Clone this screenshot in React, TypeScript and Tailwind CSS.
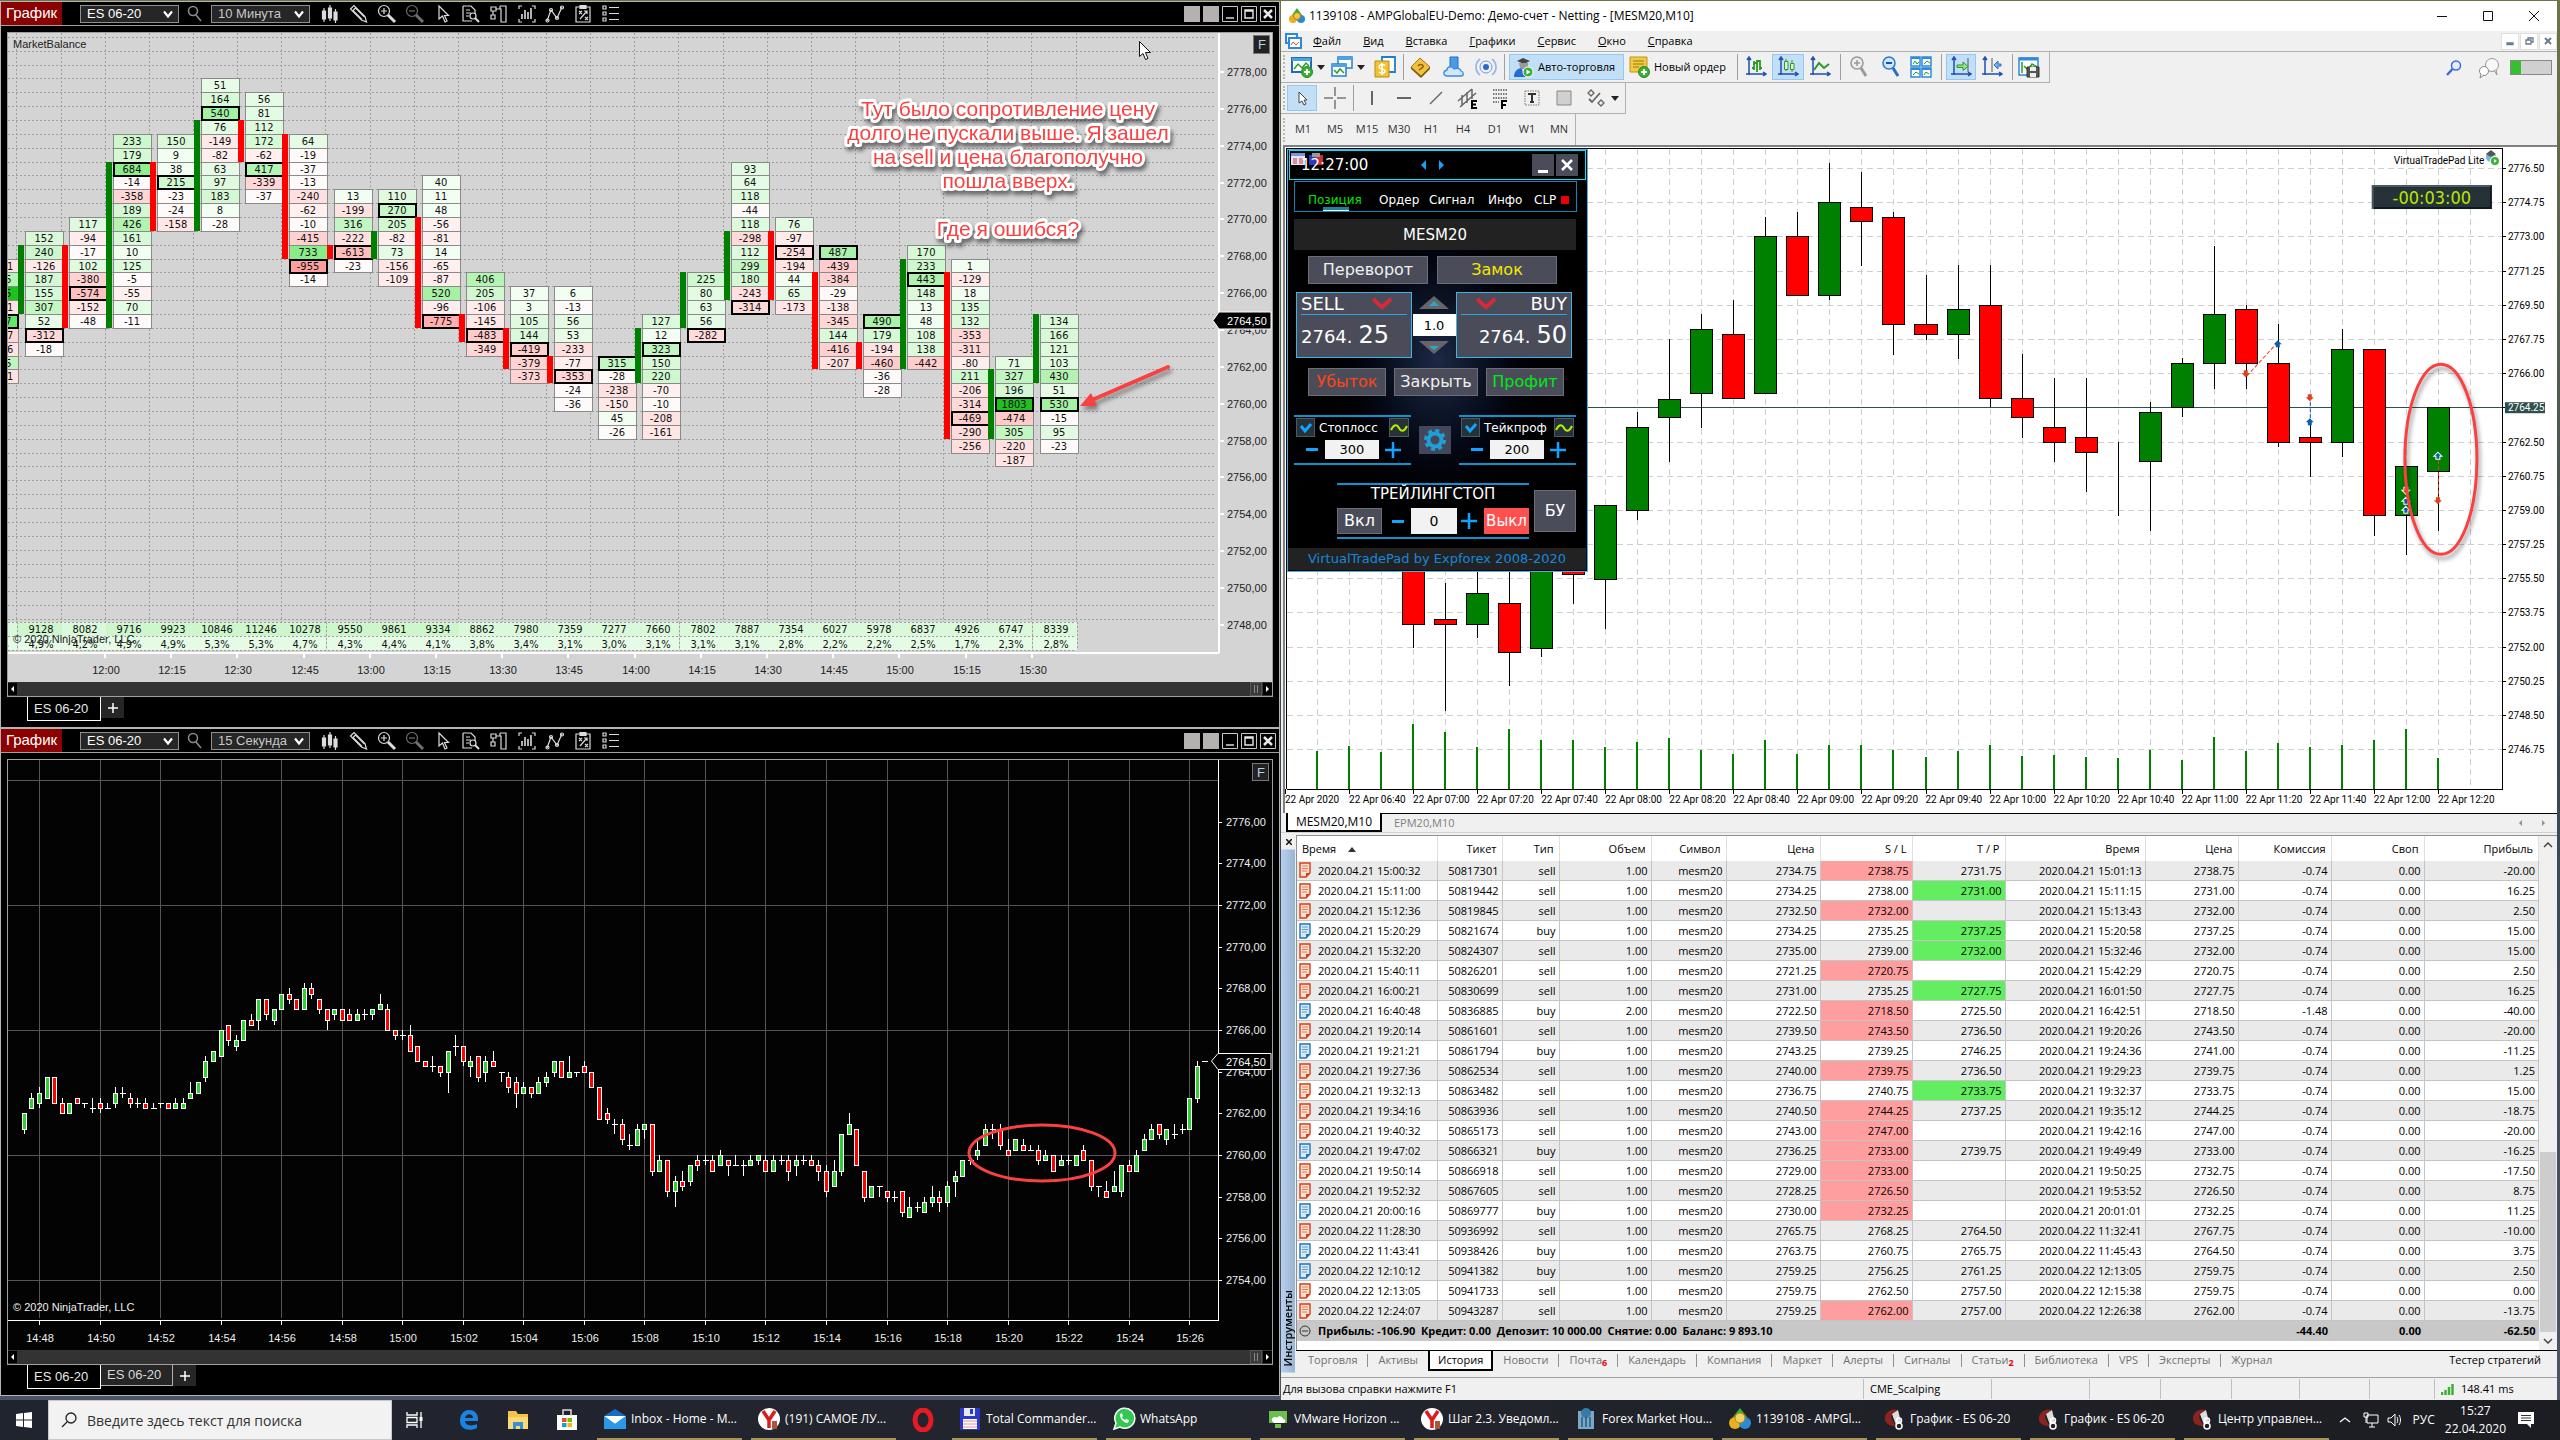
import React from "react";
import type { ReactNode } from "react";

/* ------------------------------------------------------------------ */
/* Cluster chart data                                                   */
/* ------------------------------------------------------------------ */

type Cluster = {
  start: number;
  values: number[];
  poc: number;
  bar?: [string, number, number];
  volume: string;
  share: string;
};

const UP = "#008000";
const DOWN = "#ff0000";

const clusters: Cluster[] = [
  { start: 13, values: [-1211, 2395, 1155, -1211, 3977, -1337, -1216, 2345, -1211], poc: 4, volume: "", share: "4,9%" },
  { start: 11, values: [152, 240, -126, 187, 155, 307, 52, -312, -18], poc: 7, bar: [UP, 12, 17], volume: "9128", share: "4,9%" },
  { start: 10, values: [117, -94, -17, 102, -380, -574, -152, -48], poc: 5, bar: [DOWN, 12, 18], volume: "8082", share: "4,2%" },
  { start: 4, values: [233, 179, 684, -14, -358, 189, 426, 161, 10, 125, -5, -55, 70, -11], poc: 2, bar: [UP, 6, 18], volume: "9716", share: "4,9%" },
  { start: 4, values: [150, 9, 38, 215, -23, -24, -158], poc: 3, bar: [DOWN, 6, 11], volume: "9923", share: "4,9%" },
  { start: 0, values: [51, 164, 540, 76, -149, -82, 63, 97, 183, 8, -28], poc: 2, bar: [UP, 3, 11], volume: "10846", share: "5,3%" },
  { start: 1, values: [56, 81, 112, 172, -62, 417, -339, -37], poc: 5, bar: [DOWN, 3, 6], volume: "11246", share: "5,3%" },
  { start: 4, values: [64, -19, -37, -13, -240, -62, -10, -415, 733, -955, -14], poc: 9, bar: [DOWN, 4, 13], volume: "10278", share: "4,7%" },
  { start: 8, values: [13, -199, 316, -222, -613, -23], poc: 4, bar: [DOWN, 12, 13], volume: "9550", share: "4,3%" },
  { start: 8, values: [110, 270, 205, -82, 73, -156, -109], poc: 1, bar: [UP, 11, 13], volume: "9861", share: "4,4%" },
  { start: 7, values: [40, 11, 48, -56, -81, 14, -65, -87, 520, -96, -775], poc: 10, bar: [DOWN, 10, 18], volume: "9334", share: "4,1%" },
  { start: 14, values: [406, 205, -106, -145, -483, -349], poc: 4, bar: [DOWN, 17, 19], volume: "8862", share: "3,8%" },
  { start: 15, values: [37, 3, 105, 144, -419, -379, -373], poc: 4, bar: [DOWN, 18, 21], volume: "7980", share: "3,4%" },
  { start: 15, values: [6, -13, 56, 53, -233, -77, -353, -24, -36], poc: 6, bar: [DOWN, 20, 22], volume: "7359", share: "3,1%" },
  { start: 20, values: [315, -28, -238, -150, 45, -26], poc: 0, volume: "7277", share: "3,0%" },
  { start: 17, values: [127, 12, 323, 150, 220, -70, -10, -208, -161], poc: 2, bar: [UP, 18, 22], volume: "7660", share: "3,1%" },
  { start: 14, values: [225, 80, 63, 56, -282], poc: 4, bar: [UP, 14, 18], volume: "7802", share: "3,1%" },
  { start: 6, values: [93, 64, 118, -44, 118, -298, 112, 299, 180, -243, -314], poc: 10, bar: [UP, 11, 16], volume: "7887", share: "3,1%" },
  { start: 10, values: [76, -97, -254, -194, 44, 65, -173], poc: 2, bar: [DOWN, 11, 16], volume: "7354", share: "2,8%" },
  { start: 12, values: [487, -439, -384, -29, -138, -345, 144, -416, -207], poc: 0, bar: [DOWN, 14, 21], volume: "6027", share: "2,2%" },
  { start: 17, values: [490, 179, -194, -460, -36, -28], poc: 0, bar: [DOWN, 19, 21], volume: "5978", share: "2,2%" },
  { start: 12, values: [170, 233, 443, 148, 13, 48, 108, 138, -442], poc: 2, bar: [UP, 13, 21], volume: "6837", share: "2,5%" },
  { start: 13, values: [1, -129, 18, 135, 132, -353, -311, -80, 211, -206, -314, -469, -290, -256], poc: 11, bar: [DOWN, 14, 26], volume: "4926", share: "1,7%" },
  { start: 20, values: [71, 327, 196, 1803, -474, 305, -220, -187], poc: 3, bar: [UP, 21, 26], volume: "6747", share: "2,3%" },
  { start: 17, values: [134, 166, 121, 103, 430, 51, 530, -15, 95, -23], poc: 6, bar: [UP, 17, 22], volume: "8339", share: "2,8%" },
];

const rowY = (row: number) => Math.round(78.4 + row * 13.86);
const colX = (col: number) => Math.round(24.6 + (col - 1) * 44.13);

function shade(v: number) {
  if (v >= 1000 && v < 2000) return "#1fc11f";
  const n = Math.abs(v) % 1000;
  if (v > 0) {
    const c = n < 50 ? 243 : Math.round(238 - n * 0.14);
    return `rgb(${c},${n < 50 ? 254 : Math.round(252 - n * 0.02)},${c})`;
  }
  const c = n < 50 ? 250 : Math.round(245 - n * 0.09);
  return `rgb(255,${c},${c})`;
}

function ClusterChart() {
  const rows = Array.from({ length: 43 }, (_, i) => i - 3);
  const prices = Array.from({ length: 16 }, (_, i) => i);
  return (
    <svg viewBox="8 33 1264 649" className="block h-auto w-full bg-[#d4d4d4] font-['Liberation_Sans',Arial,sans-serif]">
      <g stroke="#a0a0a0" strokeDasharray="2 2" shapeRendering="crispEdges">
        {rows.map((r) => (
          <line key={r} x1="8" x2="1216" y1={rowY(r) + 0.5} y2={rowY(r) + 0.5} />
        ))}
        {clusters.map((_, i) => (
          <line key={i} x1={colX(i) + 36.5} x2={colX(i) + 36.5} y1="33" y2="650" />
        ))}
      </g>
      {clusters.map((c, i) => (
        <g key={i} shapeRendering="crispEdges">
          <rect x={colX(i) - 7} y="622" width="44" height="14" fill={Number(c.volume) > 9000 ? "#cdf6cd" : "#daf9da"} />
          <rect x={colX(i) - 7} y="636" width="44" height="14" fill="#e6fbe6" />
          <path d={`M${colX(i) + 37.5} 622v28`} stroke="#a0a0a0" strokeDasharray="2 2" />
        </g>
      ))}
      <path d="M8 622.5H1076M8 636.5H1076M8 650.5H1076" stroke="#a0a0a0" strokeDasharray="2 2" shapeRendering="crispEdges" />
      <g fill="#111" textAnchor="middle" className="font-['DejaVu_Sans_Condensed','Noto_Sans',sans-serif]">
        {clusters.map((c, i) => (
          <g key={i} fontSize="11">
            {c.bar && (
              <rect
                x={colX(i) - 7}
                y={rowY(c.bar[1])}
                width="6"
                height={rowY(c.bar[2]) - rowY(c.bar[1])}
                fill={c.bar[0]}
                shapeRendering="crispEdges"
              />
            )}
            {c.values.map((v, j) => {
              const y = rowY(c.start + j);
              const h = rowY(c.start + j + 1) - y;
              return (
                <g key={j}>
                  <rect x={colX(i) + 0.5} y={y + 0.5} width="38" height={h} fill={shade(v)} stroke="#8a8a8a" shapeRendering="crispEdges" />
                  <text x={colX(i) + 19} y={y + 11}>{v}</text>
                </g>
              );
            })}
            <rect
              x={colX(i) + 1}
              y={rowY(c.start + c.poc) + 1}
              width="37"
              height="13"
              fill="none"
              stroke="#000"
              strokeWidth="2"
              shapeRendering="crispEdges"
            />
            <text x={colX(i) + 16} y="633">{c.volume}</text>
            <text x={colX(i) + 16} y="648">{c.share}</text>
          </g>
        ))}
      </g>
      <g stroke="#fff" strokeWidth="2" shapeRendering="crispEdges">
        <path d="M8 653H1219M1219 33V653" fill="none" />
        {prices.map((k) => (
          <line key={k} x1="1219" x2="1224" y1={Math.round(72 + k * 36.86)} y2={Math.round(72 + k * 36.86)} />
        ))}
        {prices.slice(1).map((k) => (
          <line key={k} x1={Math.round(105 + (k - 1) * 66.2)} x2={Math.round(105 + (k - 1) * 66.2)} y1="653" y2="658" />
        ))}
      </g>
      <g fontSize="11" fill="#222">
        {prices.map((k) => (
          <text key={k} x="1227" y={Math.round(76 + k * 36.86)}>{`${2778 - k * 2},00`}</text>
        ))}
        <text x="13" y="48">MarketBalance</text>
        <text x="13" y="643">© 2020 NinjaTrader, LLC</text>
        <g textAnchor="middle">
          {["12:00", "12:15", "12:30", "12:45", "13:00", "13:15", "13:30", "13:45", "14:00", "14:15", "14:30", "14:45", "15:00", "15:15", "15:30"].map((t, k) => (
            <text key={t} x={Math.round(106 + k * 66.2)} y="674">{t}</text>
          ))}
        </g>
      </g>
      <path d="M1213 320.5L1219 312H1271V329H1219z" fill="#000" stroke="#fff" />
      <text x="1227" y="325" fontSize="11" fill="#fff">2764,50</text>
      <rect x="1253.5" y="35.5" width="16" height="18" fill="#222" stroke="#777" />
      <text x="1258" y="49" fontSize="13" fill="#b8d4e8">F</text>
      <g
        fontSize="21"
        fill="#f94141"
        stroke="#fff"
        strokeWidth="6"
        strokeLinejoin="round"
        paintOrder="stroke"
        textAnchor="middle"
        className="drop-shadow-[2px_4px_2px_rgba(0,0,0,0.5)]"
      >
        <text x="1008" y="116">Тут было сопротивление цену</text>
        <text x="1008" y="140">долго не пускали выше. Я зашел</text>
        <text x="1008" y="164">на sell и цена благополучно</text>
        <text x="1008" y="188">пошла вверх.</text>
        <text x="1008" y="236">Где я ошибся?</text>
      </g>
      <g className="drop-shadow-[2px_4px_2px_rgba(0,0,0,0.4)]">
        <path d="M1168 367L1092 400" stroke="#f94141" strokeWidth="4" strokeLinecap="round" />
        <path d="M1080 406L1091 393L1097 406z" fill="#f94141" />
      </g>
      <path d="M1139.500 41.500v15l3.500-3 2.500 6 2.500-1-2.500-6h5z" fill="#fff" stroke="#111" />
    </svg>
  );
}

/* ------------------------------------------------------------------ */
/* 15 second chart: [open, close, high, low] in ticks around 2760        */
/* ------------------------------------------------------------------ */

const ticks: number[][] = [
  [5, 8, 8, 4], [9, 11, 12, 9], [10, 12, 13, 9], [11, 15, 15, 11], [15, 10, 15, 10], [10, 8, 11, 8], [8, 10, 10, 8], [11, 10, 11, 10],
  [10, 10, 10, 9], [9, 9, 11, 8], [10, 9, 11, 8], [9, 9, 10, 9], [10, 12, 13, 9], [12, 12, 13, 11], [11, 10, 12, 9], [10, 10, 11, 9],
  [10, 9, 11, 9], [9, 9, 10, 9], [10, 10, 10, 9], [10, 9, 10, 9], [9, 10, 11, 9], [9, 10, 11, 9], [11, 12, 14, 11], [12, 14, 14, 12],
  [15, 18, 19, 14], [18, 20, 20, 18], [19, 24, 24, 19], [25, 22, 25, 21], [21, 22, 23, 20], [22, 26, 26, 22], [26, 25, 27, 25],
  [26, 30, 30, 24], [30, 27, 30, 26], [26, 28, 28, 25], [28, 31, 31, 28], [31, 30, 32, 29], [30, 28, 30, 28], [28, 32, 33, 28],
  [32, 31, 33, 30], [30, 28, 30, 27], [28, 26, 28, 24], [27, 28, 28, 26], [28, 26, 28, 26], [27, 26, 28, 26], [26, 27, 28, 26],
  [27, 27, 28, 26], [27, 28, 28, 26], [28, 29, 31, 28], [28, 24, 29, 24], [24, 23, 24, 22], [23, 23, 24, 22], [23, 20, 25, 20],
  [21, 18, 21, 18], [18, 17, 18, 17], [17, 17, 19, 16], [17, 16, 17, 15], [16, 20, 20, 12], [21, 21, 23, 19], [21, 18, 21, 17],
  [17, 18, 19, 15], [19, 15, 19, 14], [16, 18, 19, 14], [18, 17, 20, 17], [16, 16, 16, 14], [15, 13, 16, 12], [14, 12, 15, 9],
  [12, 13, 14, 12], [13, 12, 13, 11], [12, 14, 15, 12], [14, 15, 16, 13], [16, 18, 18, 15], [18, 15, 18, 15], [15, 16, 19, 15],
  [16, 16, 16, 15], [17, 16, 18, 16], [16, 13, 16, 13], [13, 7, 13, 7], [8, 7, 9, 6], [6, 6, 7, 4], [6, 3, 7, 2], [2, 2, 4, 1],
  [2, 5, 6, 2], [5, 6, 6, 3], [6, -3, 6, -4], [-3, -1, 0, -3], [-1, -7, -1, -8], [-7, -5, -4, -10], [-5, -6, -3, -7], [-5, -2, -2, -6],
  [-1, -2, 0, -3], [-1, -1, 0, -2], [-1, -3, 0, -3], [-2, 0, 1, -2], [-1, -2, -1, -4], [-2, -2, 0, -2], [-2, -2, -1, -4], [-2, -1, 0, -2],
  [-1, 0, 0, -2], [-1, -3, 0, -3], [-3, -1, 0, -3], [-1, -1, 0, -2], [-1, -3, 0, -5], [-2, -1, 0, -4], [-1, -1, 0, -2], [-1, -2, 0, -2],
  [-2, -3, -1, -5], [-3, -7, -2, -8], [-6, -3, -1, -6], [-3, 4, 4, -4], [4, 6, 8, 4], [5, -2, 5, -2], [-3, -8, -3, -9], [-8, -6, -6, -8],
  [-6, -6, -6, -8], [-7, -8, -7, -9], [-8, -8, -7, -9], [-7, -11, -7, -12], [-12, -10, -8, -12], [-10, -10, -9, -11], [-11, -9, -8, -11],
  [-9, -8, -6, -10], [-8, -9, -7, -11], [-9, -6, -5, -10], [-5, -4, -3, -8], [-4, -1, -1, -4], [-1, -1, 0, -2], [0, 1, 3, -1],
  [2, 5, 6, 2], [5, 5, 6, 3], [5, 2, 6, 1], [1, 0, 3, 0], [1, 3, 3, 1], [2, 1, 3, 1], [1, 1, 2, 1], [1, -1, 2, -2], [-1, 0, 1, -1],
  [0, -3, 0, -3], [-2, -1, 0, -2], [-1, -1, 0, -2], [-2, 0, 0, -2], [1, -1, 2, -1], [-1, -6, -1, -7], [-6, -6, -6, -8], [-7, -8, -5, -8],
  [-7, -6, -3, -7], [-7, -2, -2, -8], [-2, -3, -1, -3], [-3, 0, 1, -3], [1, 3, 4, 1], [3, 5, 6, 3], [6, 4, 6, 3], [3, 5, 5, 2],
  [4, 4, 6, 3], [5, 5, 6, 4], [5, 11, 11, 5], [11, 17, 18, 10], [18, 18, 18, 18],
];

const tickY = (t: number) => Math.round(1155 - t * 5.208);

function SecondsChart() {
  const cols = Array.from({ length: 20 }, (_, i) => i);
  const colCx = (i: number) => Math.round(39 + i * 60.54);
  return (
    <svg viewBox="8 760 1264 590" className="block h-auto w-full bg-[#030303] font-['Liberation_Sans',Arial,sans-serif]">
      <g stroke="#565656" shapeRendering="crispEdges">
        {[72, 48, 24, 0, -24].map((t) => (
          <line key={t} x1="8" x2="1218" y1={tickY(t) + 0.5} y2={tickY(t) + 0.5} />
        ))}
        {cols.map((i) => (
          <line key={i} x1={colCx(i) + 0.5} x2={colCx(i) + 0.5} y1="760" y2="1318" />
        ))}
      </g>
      <g shapeRendering="crispEdges">
        {ticks.map(([o, c, h, l], i) => {
          const x = Math.round(39 + (i - 2) * 7.567);
          const top = tickY(Math.max(o, c));
          const bottom = tickY(Math.min(o, c));
          return (
            <g key={i}>
              <rect x={x} y={tickY(h)} width="1" height={tickY(l) - tickY(h)} fill="#fff" />
              {o === c ? (
                <rect x={x - 2} y={top} width="6" height="1" fill="#fff" />
              ) : (
                <rect
                  x={x - 1.5}
                  y={top + 0.5}
                  width="4"
                  height={bottom - top}
                  fill={c > o ? "#32cd32" : "#ff0000"}
                  stroke="#fff"
                />
              )}
            </g>
          );
        })}
      </g>
      <g stroke="#fff" strokeWidth="1" shapeRendering="crispEdges">
        <path d="M8 1320.5H1218.5V760" fill="none" />
        {cols.map((i) => (
          <line key={i} x1={colCx(i) + 0.5} x2={colCx(i) + 0.5} y1="1320" y2="1325" />
        ))}
        {cols.slice(0, 12).map((i) => (
          <line key={i} x1="1218" x2="1222" y1={tickY(64 - i * 8) + 0.5} y2={tickY(64 - i * 8) + 0.5} />
        ))}
      </g>
      <g fontSize="11" fill="#f0f0f0">
        {cols.slice(0, 12).map((i) => (
          <text key={i} x="1226" y={tickY(64 - i * 8) + 4}>{`${2776 - i * 2},00`}</text>
        ))}
        <text x="13" y="1311">© 2020 NinjaTrader, LLC</text>
        <g textAnchor="middle">
          {cols.map((i) => {
            const m = 48 + i * 2;
            return (
              <text key={i} x={colCx(i) + 1} y="1342">{`${m < 60 ? 14 : 15}:${String(m % 60).padStart(2, "0")}`}</text>
            );
          })}
        </g>
      </g>
      <path d="M1211.5 1061L1218 1053.5H1271V1069.5H1218z" fill="#000" stroke="#fff" />
      <text x="1226" y="1066" fontSize="11" fill="#fff">2764,50</text>
      <rect x="1252.5" y="763.5" width="16" height="17" fill="#222" stroke="#777" />
      <text x="1257" y="777" fontSize="13" fill="#b8d4e8">F</text>
      <ellipse cx="1042" cy="1153" rx="73" ry="28" fill="none" stroke="#f94141" strokeWidth="3" />
    </svg>
  );
}

/* ------------------------------------------------------------------ */
/* NinjaTrader windows                                                  */
/* ------------------------------------------------------------------ */

function DarkSelect({ label, value, muted }: { label: string; value: string; muted?: boolean }) {
  return (
    <span className="relative flex">
      <select
        aria-label={label}
        className={`h-[18px] w-[99px] appearance-none border border-[#8f8f8f] bg-[#262626] pl-1.5 text-[13px] leading-4 ${muted ? "text-[#c8c8c8]" : "text-white"}`}
      >
        <option>{value}</option>
      </select>
      <svg viewBox="0 0 10 8" className="pointer-events-none absolute top-[5px] right-1.5 h-2 w-2.5">
        <path d="M1 1.500L5 6.500L9 1.500" fill="none" stroke="#fff" strokeWidth="2.200" />
      </svg>
    </span>
  );
}

const ninjaTools: { name: string; dim?: boolean; art: ReactNode }[] = [
  { name: "Стиль графика", art: <><path d="M3 4v14M9 1v16M14.500 5v14" /><path d="M1.500 7h3v8h-3zM7.500 4h3v10h-3zM13 8h3v8h-3z" fill="currentColor" /></> },
  { name: "Рисование", art: <><path d="M1.500 5l3.500-3.500 11 11 1.500 5.500-5-2z" /><path d="M4 6.500l9 9M6.500 4l9 9M3.500 7l3.500-3.500" /></> },
  { name: "Увеличить", art: <><circle cx="7" cy="7" r="5.500" /><path d="M4 7h6M7 4v6" /><path d="M11 11l7 7" strokeWidth="3" /></> },
  { name: "Уменьшить", dim: true, art: <><circle cx="7" cy="7" r="5.500" /><path d="M4 7h6" /><path d="M11 11l7 7" strokeWidth="3" /></> },
  { name: "Курсор", art: <path d="M6 2v13l3.500-3 2.500 6 2-1-2.500-5.500h4z" /> },
  { name: "Окно данных", art: <><path d="M2 2h8l4 4v4M2 2v15h9M5 6h4M5 9h5M5 12h3" /><circle cx="12" cy="12" r="3" /><path d="M14 14l4 4" strokeWidth="2" /></> },
  { name: "Chart Trader", art: <><path d="M11 2h6v16h-5V5H7" /><path d="M2 3h5v4H2zM2 11h4v4H2zM4 7v4M11 2v3" /></> },
  { name: "Серии данных", art: <><path d="M2 5V2h3M15 2h3v3M2 15v3h3M15 18h3v-3" /><path d="M5 10v5M8 6v9M11 8v7M14 4v11" strokeWidth="1.600" /></> },
  { name: "Индикаторы", art: <><path d="M2 17L6 6l6 8L17 3" /><circle cx="2.500" cy="16.500" r="1.500" /><circle cx="6" cy="6" r="1.500" /><circle cx="12" cy="14" r="1.500" /><circle cx="17" cy="3.500" r="1.500" /></> },
  { name: "Стратегии", art: <><path d="M3 3h14v15H3z" /><path d="M7 1.500h6v3H7z" fill="currentColor" /><path d="M6 7l3 3M9 7L6 10M12 13l3 3M15 13l-3 3M7 15l7-8M11 7h3v3" /></> },
  { name: "Свойства", art: <><path d="M2 2h3v3H2zM2 8h3v3H2zM2 14h3v3H2z" /><path d="M8 3.500h10M8 9.500h10M8 15.500h10" /></> },
];

function NinjaTitleBar({ interval }: { interval: string }) {
  return (
    <header className="flex h-6 items-center border-b border-[#a0a0a0] bg-black text-white">
      <h2 className="flex h-full w-[61px] items-center justify-center bg-[#8b0000] text-[15px]">График</h2>
      <div className="ml-[18px] flex items-center">
        <DarkSelect label="Инструмент" value="ES 06-20" />
        <button aria-label="Поиск" className="mx-1.5 flex">
          <svg viewBox="0 0 20 20" className="size-5" fill="none" stroke="#8a8a8a" strokeWidth="1.600">
            <circle cx="8" cy="7" r="4.500" />
            <path d="M11 11l5 6" />
          </svg>
        </button>
        <DarkSelect label="Интервал" value={interval} muted />
      </div>
      <div className="ml-[11px] flex gap-2">
        {ninjaTools.map((t) => (
          <button key={t.name} aria-label={t.name} className={t.dim ? "text-[#707070]" : "text-[#dcdcdc]"}>
            <svg viewBox="0 0 20 20" className="size-5" fill="none" stroke="currentColor" strokeWidth="1.200">
              {t.art}
            </svg>
          </button>
        ))}
      </div>
      <div className="mr-[3px] ml-auto flex gap-[3px]">
        <span className="size-4 bg-[#b5b1b1]" />
        <span className="size-4 bg-[#b5b1b1]" />
        {[
          ["Свернуть", "M4 12h8"],
          ["Развернуть", "M4 4h8v8H4zM4 5h8"],
          ["Закрыть", "M4 4l8 8M12 4l-8 8"],
        ].map(([name, d]) => (
          <button key={name} aria-label={name} className="flex">
            <svg viewBox="0 0 16 16" className="size-4" fill="none" stroke="#e8e8e8">
              <path d="M.500.500h15v15H.500z" stroke="#c8c8c8" />
              <path d={d} strokeWidth={name === "Закрыть" ? 2.5 : 1.4} />
            </svg>
          </button>
        ))}
      </div>
    </header>
  );
}

function NinjaWindow({ interval, tabs, children }: { interval: string; tabs: string[]; children: ReactNode }) {
  return (
    <section className="flex flex-col border border-[#b4b4b4] bg-black font-['Liberation_Sans',Arial,sans-serif]">
      <NinjaTitleBar interval={interval} />
      <div className="mx-1.5 mt-1.5 border border-[#a0a0a0]">
        {children}
        <div className="flex h-3.5 items-center justify-between bg-[#333]">
          <button aria-label="Назад" className="flex h-3 w-[9px] items-center bg-black">
            <svg viewBox="0 0 9 12" className="h-3 w-[9px]"><path d="M6 3v6L3 6z" fill="#fff" /></svg>
          </button>
          <span className="mr-px ml-auto flex h-3.5 w-3 justify-center gap-0.5 border border-[#555] bg-[#3a3a3a] py-0.5">
            <i className="w-px bg-[#888]" />
            <i className="w-px bg-[#888]" />
          </span>
          <button aria-label="Вперёд" className="flex h-3 w-[9px] items-center bg-black">
            <svg viewBox="0 0 9 12" className="h-3 w-[9px]"><path d="M3 3v6l3-3z" fill="#fff" /></svg>
          </button>
        </div>
      </div>
      <nav className="flex h-[30px] items-start pl-[26px] text-[13px] text-[#d8d8d8]">
        {tabs.map((t, i) => (
          <button
            key={i}
            className={
              i === 0
                ? "h-6 w-[74px] border border-t-0 border-white bg-black pl-1.5 text-left text-[#e8e8e8]"
                : "h-[21px] w-[72px] border-r border-b border-[#b0b0b0] bg-[#262626] pl-1.5 text-left"
            }
          >
            {t}
          </button>
        ))}
        <button className="flex h-[21px] w-[23px] items-center justify-center bg-[#262626]" aria-label="Новая вкладка">
          <svg viewBox="0 0 10 10" className="size-2.5"><path d="M0 5h10M5 0v10" stroke="#fff" strokeWidth="1.500" /></svg>
        </button>
      </nav>
    </section>
  );
}

/* ------------------------------------------------------------------ */
/* MetaTrader chart                                                     */
/* ------------------------------------------------------------------ */

/* colour, body top, body bottom, wick top, wick bottom */
const bars: [string, number, number, number, number][] = [
  ["d", 560, 624, 550, 648], ["d", 619, 624, 583, 711], ["u", 593, 624, 560, 638], ["d", 603, 652, 560, 686],
  ["u", 560, 648, 560, 657], ["d", 560, 574, 560, 604], ["u", 505, 579, 505, 629], ["u", 427, 510, 412, 520],
  ["u", 399, 417, 339, 462], ["u", 329, 393, 314, 428], ["d", 334, 398, 300, 398], ["u", 236, 393, 217, 393],
  ["d", 236, 295, 212, 295], ["u", 202, 295, 163, 300], ["d", 207, 221, 172, 266], ["d", 217, 324, 212, 355],
  ["d", 324, 334, 275, 340], ["u", 309, 334, 265, 359], ["d", 305, 398, 265, 407], ["d", 398, 417, 354, 438],
  ["d", 427, 442, 378, 462], ["d", 437, 452, 378, 492], ["d", 456, 456, 442, 516], ["u", 412, 461, 402, 531],
  ["u", 363, 407, 358, 417], ["u", 314, 363, 246, 389], ["d", 309, 363, 305, 389], ["d", 363, 442, 324, 447],
  ["d", 437, 442, 425, 477], ["u", 349, 442, 329, 457], ["d", 349, 515, 349, 536], ["u", 466, 515, 466, 555],
  ["u", 407, 471, 407, 531],
];

const volumes = [
  751, 746, 752, 724, 732, 747, 729, 740, 740, 747, 742, 738, 750, 754, 740, 754, 745, 745, 750, 757, 751, 745, 756, 755, 757, 758, 750,
  760, 737, 751, 743, 747, 745, 740, 729, 758,
];

function TradeArrow({ x, y, up, outlined }: { x: number; y: number; up?: boolean; outlined?: boolean }) {
  return (
    <path
      d={up ? `M${x} ${y - 4}l4 4h-2v3h-4v-3h-2z` : `M${x} ${y + 4}l4-4h-2v-3h-4v3h-2z`}
      fill={up ? "#0a5cb0" : "#e0401c"}
      stroke={outlined ? "#fff" : "none"}
    />
  );
}

function MetaChart() {
  const levels = Array.from({ length: 18 }, (_, i) => i);
  const levelY = (i: number) => Math.round(168 + i * 34.19);
  const times = ["2020", "06:40", "07:00", "07:20", "07:40", "08:00", "08:20", "08:40", "09:00", "09:20", "09:40", "10:00", "10:20", "10:40", "11:00", "11:20", "11:40", "12:00", "12:20"];
  return (
    <svg viewBox="1285 147 1271 665" className="block h-auto w-full bg-white font-['Roboto','Noto_Sans',sans-serif]">
      <g stroke="#cfcfcf" strokeDasharray="6 4" shapeRendering="crispEdges">
        {levels.map((i) => (
          <line key={i} x1="1287" x2="2501" y1={levelY(i) + 0.5} y2={levelY(i) + 0.5} />
        ))}
        {Array.from({ length: 37 }, (_, i) => (
          <line key={i} x1={1317.5 + i * 32} x2={1317.5 + i * 32} y1="149" y2="789" />
        ))}
      </g>
      <path d="M1286 407.5H2501" stroke="#2f4f4f" shapeRendering="crispEdges" />
      <g shapeRendering="crispEdges">
        {volumes.map((y, i) => (
          <rect key={i} x={1316 + i * 32} y={y} width="2" height={789 - y} fill="#008000" />
        ))}
        {bars.map(([dir, top, bottom, hi, lo], i) => {
          const x = 1413 + i * 32;
          return (
            <g key={i}>
              <rect x={x} y={hi} width="1" height={lo - hi} />
              <rect x={x - 11 + 0.5} y={top + 0.5} width="22" height={bottom - top} fill={dir === "u" ? UP : DOWN} stroke="#000" />
            </g>
          );
        })}
        <path d="M1286.5 789V148.5H2501.5V789.5H1286.5" fill="none" stroke="#000" />
        {levels.map((i) => (
          <line key={i} x1="2501" x2="2505" y1={levelY(i) + 0.5} y2={levelY(i) + 0.5} stroke="#000" />
        ))}
        {times.map((_, i) => (
          <line key={i} x1={1285.5 + i * 64} x2={1285.5 + i * 64} y1="789" y2="793" stroke="#000" />
        ))}
      </g>
      <path d="M2246 376L2277 342" stroke="#e0401c" strokeDasharray="4 2" />
      <path d="M2309.500 402V420" stroke="#0a5cb0" strokeDasharray="4 2" />
      <path d="M2437.500 460V498" stroke="#e0401c" strokeDasharray="4 2" />
      <TradeArrow x={2245} y={373} />
      <TradeArrow x={2277} y={344} up />
      <TradeArrow x={2309} y={397} />
      <TradeArrow x={2309} y={422} up />
      <TradeArrow x={2405} y={490} outlined />
      <TradeArrow x={2405} y={501} up outlined />
      <TradeArrow x={2405} y={510} up outlined />
      <TradeArrow x={2437} y={456} up outlined />
      <TradeArrow x={2437} y={500} />
      <g fontSize="10">
        {levels.map((i) => (
          <text key={i} x="2507" y={levelY(i) + 4}>{(2776.5 - i * 1.75).toFixed(2)}</text>
        ))}
        {times.map((t, i) => (
          <text key={t} x={1285 + i * 64} y="803">{`22 Apr ${t}`}</text>
        ))}
        <text x="2393" y="164">VirtualTradePad</text>
        <text x="2467" y="164">Lite</text>
      </g>
      <rect x="2504" y="402" width="40" height="11" fill="#2f4f4f" />
      <text x="2507" y="411" fontSize="10" fill="#fff">2764.25</text>
      <circle cx="2490" cy="157" r="5" fill="#6db8e8" />
      <path d="M2485 154l5-4 5 4-5 3z" fill="#555" />
      <circle cx="2494" cy="161" r="4.500" fill="#3fae2e" stroke="#fff" />
      <path d="M2493 159v4l3-2z" fill="#fff" />
      <rect x="2371" y="185" width="120" height="24" fill="#0e1a22" />
      <path d="M2371 185h120l-2 2h-116v22h-2z" fill="#4a5a62" />
      <rect x="2373" y="187" width="116" height="20" fill="#263238" />
      <text x="2431" y="204" textAnchor="middle" fontSize="18" fill="#b8e800" className="font-['DejaVu_Sans_Condensed','Noto_Sans',sans-serif]">-00:03:00</text>
      <ellipse cx="2440" cy="459" rx="36" ry="95" fill="none" stroke="#f94141" strokeWidth="3" className="drop-shadow-[2px_4px_2px_rgba(0,0,0,0.4)]" />
    </svg>
  );
}

/* ------------------------------------------------------------------ */
/* Trade pad                                                            */
/* ------------------------------------------------------------------ */

function PadButton({ className = "", children }: { className?: string; children: ReactNode }) {
  return (
    <button className={`h-7 border border-[#6b6e76] bg-[#4a4d59] text-[16px] leading-6 ${className}`}>{children}</button>
  );
}

function QuoteButton({ side, whole, cents, right }: { side: string; whole: string; cents: string; right?: boolean }) {
  return (
    <button className="flex h-[66px] w-[116px] flex-col border border-[#3fb2ec] bg-[#4a4d59] px-1 text-white">
      <span className={`flex h-[23px] w-full items-center justify-between border-b border-[#2aa4e4] text-[18px] leading-5 ${right ? "flex-row-reverse" : ""}`}>
        {side}
        <svg viewBox="0 0 22 14" className="mx-3.5 h-3.5 w-[22px]">
          <path d="M2 2l9 8 9-8" fill="none" stroke="#d42a3a" strokeWidth="4" />
        </svg>
      </span>
      <span className={`flex w-full items-baseline gap-1.5 text-[18px] leading-10 ${right ? "justify-end" : ""}`}>
        {whole}
        <span className="text-[24px]">{cents}</span>
      </span>
    </button>
  );
}

function StopBox({ label, value }: { label: string; value: string }) {
  return (
    <div className="h-[50px] w-[117px] border-y-2 border-[#0d93cf] pt-px text-white">
      <div className="flex h-[19px] items-center pl-0.5">
        <label className="flex items-center gap-1 text-[12px]">
          <span className="relative flex size-[19px] items-center justify-center border border-[#4a5a62] bg-[#263238]">
            <input type="checkbox" defaultChecked className="absolute inset-0 appearance-none" />
            <svg viewBox="0 0 12 12" className="pointer-events-none size-3"><path d="M1 4l4 5 6-7" fill="none" stroke="#12a2ff" strokeWidth="3" /></svg>
          </span>
          {label}
        </label>
        <button aria-label="Линия" className="mr-0.5 ml-auto flex h-[19px] w-5 items-center border border-[#4a5a62] bg-[#263238]">
          <svg viewBox="0 0 18 17" className="h-[17px] w-[18px]"><path d="M1 11c3-6 6-6 8-2s5 4 8-2" fill="none" stroke="#b4f000" strokeWidth="2" /></svg>
        </button>
      </div>
      <div className="mt-[3px] flex h-[19px] items-center pl-3">
        <button aria-label="Меньше" className="h-[3px] w-3 bg-[#12a2ff]" />
        <input aria-label={label} defaultValue={value} className="ml-[7px] h-[19px] w-[54px] bg-[#f2f2f2] text-center text-[13px] text-black" />
        <button aria-label="Больше" className="ml-[5px] flex">
          <svg viewBox="0 0 18 18" className="size-[18px]"><path d="M1 9h16M9 1v16" stroke="#12a2ff" strokeWidth="2.500" /></svg>
        </button>
      </div>
    </div>
  );
}

function TradePad() {
  return (
    <section className="absolute top-0.5 left-0.5 flex h-[423px] w-[301px] flex-col border border-[#3fb2ec] bg-black bg-radial from-[#1c2946] to-black to-60% font-['DejaVu_Sans',Verdana,sans-serif]">
      <header className="mx-px flex h-[30px] w-[297px] items-center border border-[#12e0e8] bg-black text-white">
        <svg viewBox="0 0 34 14" className="mb-3 ml-px h-3.5 w-[34px] shrink-0">
          <path d="M0 1h14v12H0z" fill="#dfe6f8" /><path d="M0 1h14v3H0z" fill="#7a94e0" />
          <path d="M2 6h4v6H2zM8 6h4v6H8z" fill="#e08a9a" />
          <path d="M18 3h7v10h-7z" fill="#2a3ac0" /><path d="M25 3h7v10h-7z" fill="#c83040" /><path d="M21 1h8v4h-8z" fill="#999" />
        </svg>
        <span className="-ml-6 text-[15px]">12:27:00</span>
        <svg viewBox="0 0 24 10" className="ml-[53px] h-2.5 w-6"><path d="M5 0v10L0 5zM18 0v10l5-5z" fill="#12a2ff" /></svg>
        <button aria-label="Свернуть" className="mr-0.5 ml-auto flex size-[22px] items-end justify-center bg-[#4a4d59] pb-[3px]"><i className="h-[3px] w-2.5 bg-white" /></button>
        <button aria-label="Закрыть" className="mr-[7px] flex size-[22px] items-center justify-center bg-[#4a4d59]">
          <svg viewBox="0 0 12 12" className="size-3"><path d="M1 1l10 10M11 1L1 11" stroke="#fff" strokeWidth="2.500" /></svg>
        </button>
      </header>
      <nav className="relative mx-1.5 mt-px flex h-[31px] w-[283px] items-center border border-[#0d86bd] pt-1.5 pl-[13px] text-[12px] text-white">
        <button className="w-[71px] text-left text-[#00e800]">Позиция</button>
        <button className="w-[50px] text-left">Ордер</button>
        <button className="w-[59px] text-left">Сигнал</button>
        <button className="w-[46px] text-left">Инфо</button>
        <button className="w-[27px] text-left">CLP</button>
        <i className="size-2 bg-red-600" />
        <i className="absolute bottom-0 left-7 h-1 w-[26px] border-b border-white bg-[#2a7a98]" />
      </nav>
      <h3 className="mx-1.5 mt-[7px] h-[31px] w-[282px] bg-[#222] text-center text-[15px] leading-8 text-white">MESM20</h3>
      <div className="mt-[6px] ml-5 flex gap-[9px]">
        <PadButton className="w-[120px] text-[#f0f0f0]">Переворот</PadButton>
        <PadButton className="w-[120px] text-[#f4e800]">Замок</PadButton>
      </div>
      <div className="mt-2 ml-2 flex">
        <QuoteButton side="SELL" whole="2764." cents="25" />
        <div className="flex w-11 flex-col items-center justify-center gap-[5px]">
          <button aria-label="Больше объём" className="flex"><svg viewBox="0 0 30 13" className="h-[13px] w-[30px]"><path d="M15 0l15 13H0z" fill="#666" /><path d="M15 5l5 5H10z" fill="#2aa4d4" /></svg></button>
          <input aria-label="Объём" defaultValue="1.0" className="h-[22px] w-[43px] bg-white text-center text-[13px]" />
          <button aria-label="Меньше объём" className="flex"><svg viewBox="0 0 30 13" className="h-[13px] w-[30px]"><path d="M15 13l15-13H0z" fill="#666" /><path d="M15 9l5-4H10z" fill="#2aa4d4" /></svg></button>
        </div>
        <QuoteButton side="BUY" whole="2764." cents="50" right />
      </div>
      <div className="mt-2.5 ml-5 flex gap-2">
        <PadButton className="w-[78px] text-[#ff4418]">Убыток</PadButton>
        <PadButton className="w-[84px] text-[#f0f0f0]">Закрыть</PadButton>
        <PadButton className="w-[78px] text-[#00e818]">Профит</PadButton>
      </div>
      <div className="mt-[19px] ml-1.5 flex items-center">
        <StopBox label="Стоплосс" value="300" />
        <button aria-label="Настройки" className="mx-2 flex h-7 w-8 items-center justify-center bg-[#44475a]">
          <svg viewBox="0 0 24 24" className="size-6" fill="none" stroke="#1f9fd8">
            <circle cx="12" cy="12" r="6.500" strokeWidth="4" />
            <circle cx="12" cy="12" r="9.500" strokeWidth="3" strokeDasharray="4 3.460" />
          </svg>
        </button>
        <StopBox label="Тейкпроф" value="200" />
      </div>
      <div className="mt-[18px] ml-[49px] flex items-start gap-[5px] text-white">
        <div className="h-14 w-[192px] border-y-2 border-[#0d93cf]">
          <div className="h-[23px] text-center text-[15px] leading-[19px]">ТРЕЙЛИНГСТОП</div>
          <div className="flex h-[26px] items-center">
            <button className="h-[26px] w-[45px] border border-[#6b6e76] bg-[#4a4d59] text-[16px]">Вкл</button>
            <button aria-label="Меньше" className="ml-2.5 h-[3px] w-3 bg-[#12a2ff]" />
            <input aria-label="Трейлингстоп" defaultValue="0" className="ml-[7px] h-[26px] w-[46px] bg-[#f2f2f2] text-center text-[14px] text-black" />
            <button aria-label="Больше" className="ml-[3px] flex">
              <svg viewBox="0 0 18 18" className="size-[18px]"><path d="M1 9h16M9 1v16" stroke="#12a2ff" strokeWidth="2.500" /></svg>
            </button>
            <button className="ml-auto h-[26px] w-[45px] bg-[#ff5050] text-[15px]">Выкл</button>
          </div>
        </div>
        <button className="mt-[7px] h-[42px] w-[42px] border border-[#6b6e76] bg-[#4a4d59] text-[16px]">БУ</button>
      </div>
      <footer className="mt-auto mb-px h-[22px] w-[298px] bg-[#222] text-center text-[13px] leading-[22px] text-[#1688dc]">VirtualTradePad by Expforex 2008-2020</footer>
    </section>
  );
}

/* ------------------------------------------------------------------ */
/* MetaTrader tool bars                                                 */
/* ------------------------------------------------------------------ */

function Icon({ children, className = "size-[22px]", box = "0 0 22 22" }: { children: ReactNode; className?: string; box?: string }) {
  return (
    <svg viewBox={box} className={`shrink-0 ${className}`} fill="none">
      {children}
    </svg>
  );
}

const Caret = () => (
  <svg viewBox="0 0 8 5" className="h-[5px] w-2 shrink-0"><path d="M0 0h8L4 5z" fill="#222" /></svg>
);
const Sep = () => <i className="h-[26px] w-px bg-[#a0a0a0]" />;
const Grip = () => <i className="mx-0.5 h-6 w-0 border-l-2 border-dotted border-[#b8b8b8]" />;

function Tool({ name, children, on, w = "w-8" }: { name: string; children: ReactNode; on?: boolean; w?: string }) {
  return (
    <button
      aria-label={name}
      className={`flex h-[26px] items-center justify-center gap-1 ${w} ${on ? "border border-[#90c8f6] bg-[#c2dff5]" : ""}`}
    >
      {children}
    </button>
  );
}

const plus = (
  <>
    <circle cx="16" cy="16" r="5.500" fill="#3cb034" stroke="#1f8a1c" />
    <path d="M13 16h6M16 13v6" stroke="#fff" strokeWidth="2" />
  </>
);
const axes = <path d="M4 2v17M1 18h19M2 4l2-3 2 3M18 16l3 2-3 2" stroke="#1d4fb4" strokeWidth="1.500" />;

function MetaToolbars() {
  return (
    <div className="flex flex-col bg-[#f0f0f0]">
      <div className="flex h-[31px] items-center">
        <div className="flex h-[31px] items-center border-r border-b border-[#b0b0b0] pr-1">
          <Grip />
          <Tool name="Новый график" w="w-[42px]">
            <Icon><path d="M1 2h19v14H1z" fill="#fff" stroke="#1b6fb8" strokeWidth="2" /><path d="M1 2h19v3H1z" fill="#4aa4e4" /><path d="M3 13l4-5 4 4 4-5 3 3" stroke="#2f9a2a" strokeWidth="1.500" />{plus}</Icon>
            <Caret />
          </Tool>
          <Tool name="Профили" w="w-[38px]">
            <Icon><path d="M7 1h14v11H7z" fill="#fff" stroke="#1b7fd0" strokeWidth="1.500" /><path d="M7 1h14v3H7z" fill="#4aa4e4" /><path d="M1 8h14v12H1z" fill="#fff" stroke="#1b7fd0" strokeWidth="1.500" /><path d="M1 8h14v3H1z" fill="#4aa4e4" /><path d="M3 14l3 3 3-4 4 4" stroke="#2f9a2a" strokeWidth="1.500" /></Icon>
            <Caret />
          </Tool>
          <Tool name="Обзор рынка" w="w-9">
            <Icon><path d="M8 1h13v15H8z" fill="#fff" stroke="#1b7fd0" strokeWidth="1.800" /><path d="M1 5h14v16H1z" fill="#f2c230" stroke="#c08a10" /><path d="M11 9.500c-2-2-6-1-6 1.500s6 1.500 6 4-4 3-6 1M8 7v12" stroke="#fff" strokeWidth="1.500" /></Icon>
          </Tool>
          <Sep />
          <Tool name="Навигатор" w="w-[34px]">
            <Icon><path d="M1 11L10 2l10 9-9 9z" fill="#f0c040" stroke="#a87810" /><path d="M1 11l10 9v2L1 13zM11 20l9-9v2l-9 9z" fill="#7a5a18" /><path d="M8 10c2-3 6-1 5 1l-4 3" stroke="#8a5c00" strokeWidth="1.500" /></Icon>
          </Tool>
          <Tool name="Облако">
            <Icon><path d="M7 1h8v12H7z" fill="#4a9ae4" stroke="#1b6fc8" /><path d="M3 20c-3-1-3-5 1-6 0-4 6-4 7-1 5-2 7 1 7 2 3 1 3 5 0 5z" fill="#cfe6fb" stroke="#3a8ae0" strokeWidth="1.300" /></Icon>
          </Tool>
          <Tool name="Сигналы">
            <Icon><circle cx="11" cy="11" r="3" fill="#2a6ad0" /><circle cx="11" cy="11" r="6" stroke="#6a9ae0" /><path d="M5 3a10 10 0 000 16M17 3a10 10 0 010 16" stroke="#9ab8e8" strokeWidth="1.800" /></Icon>
          </Tool>
          <i className="w-0.5" />
          <Sep />
          <button className="mx-1 flex h-[26px] w-[115px] items-center gap-1 border border-[#90c8f6] bg-[#c2dff5] pl-0.5 text-[11px] whitespace-nowrap">
            <Icon><path d="M5 5l6-3 7 3-6 3z" fill="#444" /><path d="M7 7h9v4l-4 3-4-2z" fill="#9a9a9a" /><path d="M2 21c0-6 3-8 7-9l5 9z" fill="#2a6ad8" /><circle cx="16" cy="16" r="5" fill="#3cb034" stroke="#fff" /><path d="M14.500 13.500v5l4-2.500z" fill="#fff" /></Icon>
            Авто-торговля
          </button>
          <button className="flex h-[26px] w-[106px] items-center gap-1 text-[11px] whitespace-nowrap">
            <Icon><path d="M2 1h17v15H2z" fill="#f2cc40" stroke="#c09418" /><path d="M5 5h11M5 8h11M5 11h6" stroke="#9a7410" />{plus}</Icon>
            Новый ордер
          </button>
          <i className="w-[3px]" />
          <Sep />
          <i className="w-0.5" />
          <Tool name="Бары"><Icon>{axes}<path d="M9 5v9M7 12h2M9 7h3v9M12 15V5h3v9M15 12h2" stroke="#2a9a24" strokeWidth="1.800" /></Icon></Tool>
          <Tool name="Свечи" on><Icon>{axes}<path d="M9 3v12M15 4v12" stroke="#2a9a24" /><path d="M7.500 5.500h3.500v8H7.500zM13.500 7.500H17v6h-3.500z" fill="#dff6dc" stroke="#2a9a24" /></Icon></Tool>
          <Tool name="Линия"><Icon>{axes}<path d="M5 14l5-7 5 5 5-4" stroke="#2a9a24" strokeWidth="2" /></Icon></Tool>
          <i className="w-1" />
          <Sep />
          <Tool name="Крупнее" w="w-9"><Icon><circle cx="9" cy="7" r="6" fill="#eee" stroke="#999" strokeWidth="1.500" /><path d="M6 7h6M9 4v6" stroke="#999" strokeWidth="1.500" /><path d="M13 12l5 8" stroke="#999" strokeWidth="3" /></Icon></Tool>
          <Tool name="Мельче" w="w-7"><Icon><circle cx="9" cy="7" r="6" fill="#cfe6fb" stroke="#2a7ad0" strokeWidth="1.500" /><path d="M6 7h6" stroke="#1d4fb4" strokeWidth="2" /><path d="M13 12l5 8" stroke="#2a6ac8" strokeWidth="3" /></Icon></Tool>
          <Tool name="Мозаика"><Icon><path d="M1 1h9v9H1zM12 1h9v9h-9zM1 12h9v9H1zM12 12h9v9h-9z" fill="#fff" stroke="#2a8ae0" strokeWidth="1.500" /><path d="M1 2h9M12 2h9M1 13h9M12 13h9" stroke="#2a8ae0" strokeWidth="2" /><path d="M3 8l2-3 2 3 2-2M14 8l3-3 3 2M3 19l3-3 3 2M14 19l2-3 3 2" stroke="#2a9a24" /></Icon></Tool>
          <i className="w-1" />
          <Sep />
          <i className="w-1" />
          <Tool name="Автопрокрутка" on w="w-[30px]"><Icon>{axes}<path d="M18 2v14" stroke="#556" /><path d="M7 9h6v-3l5 4.500-5 4v-3H7z" fill="#9be08a" stroke="#2a9a24" /></Icon></Tool>
          <Tool name="Сдвиг"><Icon>{axes}<path d="M11 2v14" stroke="#556" /><path d="M20 8h-3V5l-4 4 4 4v-3h3z" fill="#7ab4f0" stroke="#2a6ac8" /></Icon></Tool>
          <i className="w-1" />
          <Sep />
          <Tool name="Шаблоны"><Icon><path d="M1 2h19v17H1z" fill="#fff" stroke="#2a8ae0" strokeWidth="1.500" /><path d="M1 3h19" stroke="#2a8ae0" strokeWidth="3" /><path d="M4 6v11M6 10l4 4 4-6 5 3" stroke="#2a9a24" strokeWidth="1.500" /><path d="M9 11h12v10H9z" fill="#555" stroke="#333" /><path d="M12 11h6v4h-6zM12 17h6v4h-6z" fill="#eee" /></Icon></Tool>
        </div>
        <div className="mr-[5px] ml-auto flex items-center gap-3.5">
          <button aria-label="Поиск" className="mr-0.5"><Icon className="size-4" box="0 0 16 16"><circle cx="10" cy="5.500" r="4.500" fill="#e4eefc" stroke="#3a6ae0" strokeWidth="1.500" /><path d="M6.500 9L1 15" stroke="#3a6ae0" strokeWidth="2.500" /></Icon></button>
          <button aria-label="Чат"><Icon><circle cx="14" cy="8" r="6.500" fill="#f8f8f8" stroke="#999" /><path d="M16 13l3 5-1-6" fill="#eee" stroke="#999" /><circle cx="6" cy="14" r="4.500" fill="#fff" stroke="#888" /><path d="M3 17l-1 4 4-3" fill="#fff" stroke="#888" /></Icon></button>
          <span className="-ml-1 flex h-[15px] w-[42px] border border-[#888] bg-[#d0d0d0]"><i className="w-2.5 bg-[#34c030]" /></span>
        </div>
      </div>
      <div className="flex h-[31px] w-fit items-center border-r border-b border-[#b0b0b0] pr-px">
        <Grip />
        <Tool name="Стрелка" on w="w-[30px]"><Icon><path d="M8 5v11l3-2 2 4 2-1-2-4h3z" fill="#fff" stroke="#444" /></Icon></Tool>
        <Tool name="Перекрестие" w="w-9"><Icon><path d="M11 0v9M11 13v9M0 11h9M13 11h9" stroke="#777" strokeWidth="1.500" /></Icon></Tool>
        <Sep />
        <i className="w-0.5" />
        <Tool name="Вертикальная линия"><Icon><path d="M11 4v14" stroke="#666" strokeWidth="2" /></Icon></Tool>
        <Tool name="Горизонтальная линия"><Icon><path d="M4 11h14" stroke="#666" strokeWidth="2" /></Icon></Tool>
        <Tool name="Трендовая линия"><Icon><path d="M5 17L17 5" stroke="#666" strokeWidth="1.500" /></Icon></Tool>
        <Tool name="Канал"><Icon><path d="M1 14L15 2M3 20L19 6M5 8v11M10 5v11M15 2v10" stroke="#666" strokeWidth="1.500" /><path d="M20 14h-5v7h5M15 17.500h4" stroke="#000" strokeWidth="2" /></Icon></Tool>
        <Tool name="Фибоначчи"><Icon><path d="M4 3h14M4 7h14M4 11h14M4 15h6" stroke="#555" strokeWidth="1.500" strokeDasharray="1.500 1" /><path d="M18 14h-5v8M13 18h4" stroke="#000" strokeWidth="2" /></Icon></Tool>
        <Tool name="Текст"><Icon><path d="M4 4h14v14H4z" stroke="#777" strokeDasharray="1.500 1" /><path d="M7 7h8M11 7v8M9 15h4" stroke="#333" strokeWidth="2" /></Icon></Tool>
        <Tool name="Прямоугольник"><Icon><path d="M4 4h14v14H4z" fill="#d0d0d0" stroke="#888" /></Icon></Tool>
        <Tool name="Стрелки" w="w-11"><Icon><path d="M6 3l3 3-3 3-3-3zM16 13l3 3-3 3-3-3z" stroke="#666" strokeWidth="1.300" /><path d="M4 12l3 3 8-9" stroke="#666" strokeWidth="1.800" /></Icon><Caret /></Tool>
      </div>
      <div className="flex h-[31px] w-fit items-center border-r border-[#b0b0b0] text-[11px] text-[#333]">
        <Grip />
        {["M1", "M5", "M15", "M30", "H1", "H4", "D1", "W1", "MN"].map((t) => (
          <button key={t} className="w-8">{t}</button>
        ))}
      </div>
    </div>
  );
}

/* ------------------------------------------------------------------ */
/* Trade history                                                        */
/* ------------------------------------------------------------------ */

/* time, ticket, side, volume, price, S/L, T/P, close time, close price, commission, profit; "*" marks a hit level */
const trades: string[] = [
  "21 15:00:32|50817301|sell|1.00|2734.75|*2738.75|2731.75|21 15:01:13|2738.75|-0.74|-20.00",
  "21 15:11:00|50819442|sell|1.00|2734.25|2738.00|*2731.00|21 15:11:15|2731.00|-0.74|16.25",
  "21 15:12:36|50819845|sell|1.00|2732.50|*2732.00||21 15:13:43|2732.00|-0.74|2.50",
  "21 15:20:29|50821674|buy|1.00|2734.25|2735.25|*2737.25|21 15:20:58|2737.25|-0.74|15.00",
  "21 15:32:20|50824307|sell|1.00|2735.00|2739.00|*2732.00|21 15:32:46|2732.00|-0.74|15.00",
  "21 15:40:11|50826201|sell|1.00|2721.25|*2720.75||21 15:42:29|2720.75|-0.74|2.50",
  "21 16:00:21|50830699|sell|1.00|2731.00|2735.25|*2727.75|21 16:01:50|2727.75|-0.74|16.25",
  "21 16:40:48|50836885|buy|2.00|2722.50|*2718.50|2725.50|21 16:42:51|2718.50|-1.48|-40.00",
  "21 19:20:14|50861601|sell|1.00|2739.50|*2743.50|2736.50|21 19:20:26|2743.50|-0.74|-20.00",
  "21 19:21:21|50861794|buy|1.00|2743.25|2739.25|2746.25|21 19:24:36|2741.00|-0.74|-11.25",
  "21 19:27:36|50862534|sell|1.00|2740.00|*2739.75|2736.50|21 19:29:23|2739.75|-0.74|1.25",
  "21 19:32:13|50863482|sell|1.00|2736.75|2740.75|*2733.75|21 19:32:37|2733.75|-0.74|15.00",
  "21 19:34:16|50863936|sell|1.00|2740.50|*2744.25|2737.25|21 19:35:12|2744.25|-0.74|-18.75",
  "21 19:40:32|50865173|sell|1.00|2743.00|*2747.00||21 19:42:16|2747.00|-0.74|-20.00",
  "21 19:47:02|50866321|buy|1.00|2736.25|*2733.00|2739.75|21 19:49:49|2733.00|-0.74|-16.25",
  "21 19:50:14|50866918|sell|1.00|2729.00|*2733.00||21 19:50:25|2732.75|-0.74|-17.50",
  "21 19:52:32|50867605|sell|1.00|2728.25|*2726.50||21 19:53:52|2726.50|-0.74|8.75",
  "21 20:00:16|50869777|buy|1.00|2730.00|*2732.25||21 20:01:01|2732.25|-0.74|11.25",
  "22 11:28:30|50936992|sell|1.00|2765.75|2768.25|2764.50|22 11:32:41|2767.75|-0.74|-10.00",
  "22 11:43:41|50938426|buy|1.00|2763.75|2760.75|2765.75|22 11:45:43|2764.50|-0.74|3.75",
  "22 12:10:12|50941382|buy|1.00|2759.25|2756.25|2761.25|22 12:13:05|2759.75|-0.74|2.50",
  "22 12:13:05|50941733|sell|1.00|2759.75|2762.50|2757.50|22 12:15:38|2759.75|-0.74|0.00",
  "22 12:24:07|50943287|sell|1.00|2759.25|*2762.00|2757.00|22 12:26:38|2762.00|-0.74|-13.75",
];

const heads: [string, string][] = [
  ["Время", "w-[140px]"], ["Тикет", "w-[65px]"], ["Тип", "w-[57px]"], ["Объем", "w-[92px]"], ["Символ", "w-[75px]"], ["Цена", "w-[94px]"],
  ["S / L", "w-[92px]"], ["T / P", "w-[93px]"], ["Время", "w-[140px]"], ["Цена", "w-[93px]"], ["Комиссия", "w-[93px]"], ["Своп", "w-[93px]"], ["Прибыль", ""],
];

function History() {
  return (
    <table className="w-full table-fixed border-collapse text-[11px] leading-[19px] text-black">
      <thead>
        <tr className="h-[25px] bg-white text-[11px]">
          {heads.map(([h, w], i) => (
            <th key={i} className={`${w} border-r border-[#e0e0e0] px-[5px] font-normal ${i ? "text-right" : "text-left"}`}>
              {h}
              {i === 0 && <span className="ml-3 inline-block border-x-4 border-b-5 border-x-transparent border-b-[#333] align-middle" />}
            </th>
          ))}
        </tr>
      </thead>
      <tbody>
        {trades.map((row, r) => {
          const f = row.split("|");
          const sell = f[2] === "sell";
          const cells = [f[1], f[2], f[3], "mesm20", f[4], f[5], f[6], `2020.04.${f[7]}`, f[8], f[9], "0.00", f[10]];
          return (
            <tr key={f[1]} className={`h-5 ${r % 2 ? "bg-white" : "bg-[#eaeaea]"}`}>
              <td className="border-r border-b border-[#c4c4c4] px-0.5">
                <span className="flex items-center gap-[7px]">
                  <Icon className="h-4 w-3" box="0 0 12 16">
                    <path d="M1 1h10v10l-4 4H1z" fill={sell ? "#fbe0d4" : "#d8eaf8"} stroke={sell ? "#d83c14" : "#1f74b8"} strokeWidth="1.400" />
                    <path d="M7 15v-4h4z" fill={sell ? "#d83c14" : "#1f74b8"} />
                    <path d="M3 4h6M3 6.500h6M3 9h5" stroke={sell ? "#e87850" : "#5a9ccc"} />
                  </Icon>
                  {`2020.04.${f[0]}`}
                </span>
              </td>
              {cells.map((c, i) => {
                const hit = c.startsWith("*");
                const tone = hit ? (i === 5 ? "bg-[#ff9e9e]" : "bg-[#62ee60]") : "";
                return (
                  <td key={i} className={`border-r border-b border-[#c4c4c4] px-[3px] text-right ${tone}`}>
                    {hit ? c.slice(1) : c}
                  </td>
                );
              })}
            </tr>
          );
        })}
        <tr className="h-5 bg-[#c8c8c8] font-bold">
          <td colSpan={10} className="px-0.5">
            <span className="flex items-center gap-[7px]">
              <Icon className="size-3" box="0 0 12 12"><circle cx="6" cy="6" r="5" stroke="#333" /><path d="M3 6h6" stroke="#333" /></Icon>
              Прибыль: -106.90&nbsp; Кредит: 0.00&nbsp; Депозит: 10 000.00&nbsp; Снятие: 0.00&nbsp; Баланс: 9 893.10
            </span>
          </td>
          <td className="px-[3px] text-right">-44.40</td>
          <td className="px-[3px] text-right">0.00</td>
          <td className="px-[3px] text-right">-62.50</td>
        </tr>
      </tbody>
    </table>
  );
}

const toolTabs: [string, string?][] = [
  ["Торговля"], ["Активы"], ["История"], ["Новости"], ["Почта", "6"], ["Календарь"], ["Компания"], ["Маркет"], ["Алерты"], ["Сигналы"],
  ["Статьи", "2"], ["Библиотека"], ["VPS"], ["Эксперты"], ["Журнал"],
];

function MetaTrader() {
  return (
    <section className="mt-px mr-[3px] ml-px flex flex-1 flex-col bg-[#f0f0f0] font-['Open_Sans','Noto_Sans',sans-serif] text-black">
      <header className="flex h-[30px] items-center bg-white pl-2">
        <Icon className="size-4" box="0 0 16 16">
          <path d="M8 0l5 7-5 4-5-4z" fill="#3aae3a" />
          <circle cx="4" cy="11" r="4" fill="#e8b020" /><circle cx="12" cy="11" r="4" fill="#2a8ad8" />
          <circle cx="8" cy="8" r="3.500" fill="#f4c840" stroke="#b08010" />
        </Icon>
        <h1 className="ml-1 text-[12px]">1139108 - AMPGlobalEU-Demo: Демо-счет - Netting - [MESM20,M10]</h1>
        <div className="mr-[18px] ml-auto flex gap-9">
          {["M0 5.500h10", "M.500.500h9v9h-9z", "M0 0l10 10M10 0L0 10"].map((d, i) => (
            <button key={d} aria-label={["Свернуть", "Развернуть", "Закрыть"][i]}>
              <Icon className="size-2.5" box="0 0 10 10"><path d={d} stroke="#111" /></Icon>
            </button>
          ))}
        </div>
      </header>
      <nav className="flex h-[21px] items-center border-b border-[#b0b0b0] text-[11px]">
        <Icon className="ml-1 h-4 w-[17px]" box="0 0 17 16">
          <path d="M1 1h11v9H1z" fill="#fff" stroke="#2a8ae0" strokeWidth="2" /><path d="M4 5h12v10H4z" fill="#fff" stroke="#2a8ae0" strokeWidth="2" /><path d="M6 12l2-3 3 3 3-3" stroke="#e05030" />
        </Icon>
        {["Файл", "Вид", "Вставка", "Графики", "Сервис", "Окно", "Справка"].map((m) => (
          <a key={m} href="#" className="mx-1.5 px-[5px]">
            <u>{m[0]}</u>
            {m.slice(1)}
          </a>
        ))}
        <div className="ml-auto flex gap-px">
          {["M4 9h6v1.500H4z", "M4 6h5v4H4zM6 6V4h5v4H9", "M4 4l6 6M10 4l-6 6"].map((d, i) => (
            <button key={d} aria-label={["Свернуть график", "Восстановить график", "Закрыть график"][i]} className="flex h-[17px] w-[18px] items-center justify-center border border-[#e0e0e0] bg-white">
              <Icon className="size-3.5" box="0 0 14 14"><path d={d} stroke="#6a7a90" strokeWidth={i === 2 ? 2 : 1.3} /></Icon>
            </button>
          ))}
        </div>
      </nav>
      <MetaToolbars />
      <div className="relative ml-0.5 border-t-2 border-l-2 border-[#808080]">
        <MetaChart />
        <TradePad />
      </div>
      <nav className="flex h-5 border-b border-[#d0d0d0] text-[12px] leading-[18px]">
        <button className="ml-[5px] h-[19px] w-24 border-2 border-t-0 border-black bg-white">MESM20,M10</button>
        <button className="grow border-t border-black pl-3 text-left text-[11px] text-[#808080]">EPM20,M10</button>
        <span className="flex items-center gap-5 border-t border-black pr-3 text-[#909090]">
          <svg viewBox="0 0 3 6" className="h-1.5 w-[3px]"><path d="M3 0v6L0 3z" fill="#909090" /></svg>
          <svg viewBox="0 0 3 6" className="h-1.5 w-[3px]"><path d="M0 0v6l3-3z" fill="#909090" /></svg>
        </span>
      </nav>
      <div className="mt-0.5 flex flex-1">
        <aside className="flex w-[15px] flex-col items-center">
          <button aria-label="Закрыть панель" className="flex h-3.5 items-center"><Icon className="size-1.5" box="0 0 6 6"><path d="M0 0l6 6M6 0L0 6" stroke="#111" strokeWidth="1.500" /></Icon></button>
          <div className="mr-px flex w-3.5 flex-1 rotate-180 items-center bg-gradient-to-l from-[#b8d0ee] to-[#98b4d0] pt-1.5 text-[11px] leading-3 font-semibold [writing-mode:vertical-rl]">Инструменты</div>
        </aside>
        <div className="flex flex-1 flex-col">
          <div className="flex border border-r-0 border-[#909090] border-b-transparent bg-white">
            <div className="flex-1 pb-[9px]"><History /></div>
            <div className="flex w-[18px] flex-col items-center justify-between bg-[#f0f0f0] py-1.5">
              <Icon className="h-1.5 w-2.5" box="0 0 10 6"><path d="M1 5l4-4 4 4" stroke="#444" strokeWidth="1.500" /></Icon>
              <i className="mt-auto mb-1.5 h-[180px] w-[16px] bg-[#cdcdcd]" />
              <Icon className="h-1.5 w-2.5" box="0 0 10 6"><path d="M1 1l4 4 4-4" stroke="#444" strokeWidth="1.500" /></Icon>
            </div>
          </div>
          <nav className="-mt-px flex h-5 border-t border-black pl-0.5 text-[11px] leading-[18px] text-[#707070]">
            {toolTabs.map(([t, badge]) => (
              <button
                key={t}
                className={
                  t === "История"
                    ? "h-5 border-2 border-t-0 border-black bg-white px-2 text-black"
                    : t === "Журнал" || t === "Активы"
                      ? "px-2.5"
                      : "my-[3px] border-r border-[#909090] px-2.5 leading-3"
                }
              >
                {t}
                {badge && <sub className="text-[9px] font-bold text-red-600">{badge}</sub>}
              </button>
            ))}
            <span className="mr-4 ml-auto text-black">Тестер стратегий</span>
          </nav>
        </div>
      </div>
      <footer className="mt-[5px] flex h-[23px] items-center border-t border-[#a0a0a0] text-[11px] leading-5">
        <span className="flex-1 pl-0.5">Для вызова справки нажмите F1</span>
        <span className="w-32 border-l border-[#c0c0c0] pl-1.5">CME_Scalping</span>
        <i className="h-5 w-[98px] border-l border-[#c0c0c0]" />
        <i className="h-5 w-[71px] border-l border-[#c0c0c0]" />
        <i className="h-5 w-[71px] border-l border-[#c0c0c0]" />
        <i className="h-5 w-[68px] border-l border-[#c0c0c0]" />
        <i className="h-5 w-[70px] border-l border-[#c0c0c0]" />
        <i className="h-5 w-[65px] border-l border-[#c0c0c0]" />
        <span className="flex w-[123px] items-center gap-1.5 border-l border-[#c0c0c0] pl-1.5">
          <Icon className="h-3 w-3.5" box="0 0 14 12"><path d="M1 12V9M4.500 12V7M8 12V4M11.500 12V1" stroke="#3cb034" strokeWidth="2.500" /></Icon>
          148.41 ms
        </span>
      </footer>
    </section>
  );
}

/* ------------------------------------------------------------------ */
/* Task bar                                                             */
/* ------------------------------------------------------------------ */

const yandex = <><circle cx="12" cy="12" r="11" fill="#fff" /><path d="M6 4l6 9 6-9M12 12v9" stroke="#d81e1e" strokeWidth="3.500" /><path d="M15 14h5v8h-5z" fill="#a8583a" /></>;
const ninja = <><path d="M3 13C2 5 10 1 16 3l-6 4c-2 4 1 8 4 12-6 0-10-2-11-6z" fill="#8a2420" /><path d="M10 7l6-4 3 12-5 3z" fill="#ddd" /><path d="M17 11a2.500 2.500 0 110 5 3 3 0 110 6 3 3 0 110-6 2.500 2.500 0 110-5z" stroke="#fff" strokeWidth="1.500" /></>;
const meta = <><path d="M12 1l7 9-7 6-7-6z" fill="#3aae3a" /><circle cx="7" cy="16" r="6" fill="#e8b020" /><circle cx="17" cy="16" r="6" fill="#2a8ad8" /><circle cx="12" cy="11" r="5" fill="#f4d060" stroke="#b08010" /></>;

const pinned: Record<string, ReactNode> = {
  edge: <path d="M3 13C3 5 8 2 12 2c6 0 9 4 9 9v2H8c0 4 6 6 12 3v4c-8 4-17 1-17-7zM8 10h8c0-5-7-5-8 0z" fill="#1a84e0" />,
  folder: <><path d="M2 3h8l2 3h10v15H2z" fill="#f4c34a" /><path d="M2 9h20v12H2z" fill="#fbd976" /><path d="M7 14h10v7h-3v-3h-4v3H7z" fill="#3a90d8" /></>,
  store: <><path d="M2 7h20v15H2z" fill="#fff" /><path d="M8 8V2h8v6" stroke="#ddd" strokeWidth="1.500" /><path d="M7 10h4.500v4H7z" fill="#e8502a" /><path d="M12.500 10H17v4h-4.500z" fill="#7ab800" /><path d="M7 15h4.500v4H7z" fill="#1a9ae0" /><path d="M12.500 15H17v4h-4.500z" fill="#f4b800" /></>,
};

function AppIcon({ children }: { children: ReactNode }) {
  return <Icon className="size-6" box="0 0 24 24">{children}</Icon>;
}

function Task({ label, children }: { label: string; children: ReactNode }) {
  return (
    <button className="mr-[9px] flex h-10 w-[145px] items-center gap-1 border-b-2 border-[#a8935a] pl-1.5 text-[12px] text-white">
      <AppIcon>{children}</AppIcon>
      <span className="truncate">{label}</span>
    </button>
  );
}

function Taskbar() {
  return (
    <footer className="flex h-10 items-center bg-gradient-to-r from-[#20242e] via-[#23252e] to-[#1c1d22] font-['Open_Sans','Noto_Sans',sans-serif] text-white">
      <button aria-label="Пуск" className="flex w-12 justify-center">
        <Icon className="size-4" box="0 0 16 16"><path d="M0 2l7-1v6.500H0zM8 1l8-1v7.500H8zM0 8.500h7V15l-7-1zM8 8.500h8V16l-8-1z" fill="#fff" /></Icon>
      </button>
      <label className="flex h-10 w-[344px] items-center gap-2.5 border border-[#c8c8c8] bg-[#f2f2f2] pl-3">
        <Icon className="size-4" box="0 0 16 16"><circle cx="10" cy="6" r="5" stroke="#222" strokeWidth="1.300" /><path d="M6 10l-5 5" stroke="#222" strokeWidth="1.300" /></Icon>
        <input aria-label="Поиск" placeholder="Введите здесь текст для поиска" className="w-72 bg-transparent text-[14px] outline-none placeholder:text-[#333]" />
      </label>
      <button aria-label="Представление задач" className="ml-3.5">
        <Icon className="h-4 w-[18px]" box="0 0 18 16"><path d="M1 0v3h10V0M1 16v-3h10v3M1 5.500h10v5H1zM15 0v16" stroke="#fff" strokeWidth="1.300" /><path d="M13.500 5h3v4h-3z" fill="#fff" /></Icon>
      </button>
      <button aria-label="Edge" className="ml-[33px]"><AppIcon>{pinned.edge}</AppIcon></button>
      <button aria-label="Проводник" className="ml-[25px]"><AppIcon>{pinned.folder}</AppIcon></button>
      <button aria-label="Магазин" className="mr-[18px] ml-[25px]"><AppIcon>{pinned.store}</AppIcon></button>
      <Task label="Inbox - Home - M..."><path d="M1 9l11-7 11 7v13H1z" fill="#1a6cc0" /><path d="M1 9h22l-11 8z" fill="#fff" /><path d="M1 9l11 8 11-8v13H1z" fill="#2a9ae8" /></Task>
      <Task label="(191) САМОЕ ЛУ...">{yandex}</Task>
      <button aria-label="Opera" className="mr-[17px] ml-1.5"><AppIcon><ellipse cx="12" cy="12" rx="8" ry="10" stroke="#e81a24" strokeWidth="5" /></AppIcon></button>
      <Task label="Total Commander..."><path d="M2 1h20v22H2z" fill="#2a3ac8" /><path d="M6 1h11v8H6z" fill="#e8e8f0" /><path d="M12 2h3v5h-3z" fill="#2a3ac8" /><path d="M5 12h14v10H5z" fill="#fff" /><path d="M5 14h14M5 17h14M5 20h14" stroke="#e08a9a" /></Task>
      <Task label="WhatsApp"><path d="M2 22l2-6A10 10 0 118 20z" fill="#2fc850" stroke="#fff" strokeWidth="1.500" /><path d="M8 7c-1 4 4 9 8 9l1-3-3-1-1 1c-2-1-3-2-3-3l1-1-1-3z" fill="#fff" /></Task>
      <Task label="VMware Horizon ..."><path d="M3 4h18v12H3z" fill="#6cc04a" /><path d="M6 14c-1-4 4-5 5-3 1-3 6-2 6 1 3 0 3 4 0 4H8z" fill="#fff" /><path d="M9 17h6v4H9z" fill="#6cc04a" /></Task>
      <Task label="Шаг 2.3. Уведомл...">{yandex}</Task>
      <Task label="Forex Market Hou..."><path d="M4 4h16v18H4z" fill="#7aa8c8" /><circle cx="12" cy="6" r="5" fill="#3a78a8" /><path d="M8 10v10M12 10v10M16 10v10" stroke="#2a5878" strokeWidth="1.500" /></Task>
      <Task label="1139108 - AMPGl...">{meta}</Task>
      <Task label="График - ES 06-20">{ninja}</Task>
      <Task label="График - ES 06-20">{ninja}</Task>
      <Task label="Центр управлени...">{ninja}</Task>
      <div className="mr-[26px] ml-auto flex items-center text-[12px] leading-[18px]">
        <button aria-label="Скрытые значки" className="mr-3"><Icon className="h-1.5 w-3" box="0 0 12 6"><path d="M1 5l5-4 5 4" stroke="#fff" strokeWidth="1.300" /></Icon></button>
        <Icon className="size-4" box="0 0 16 16"><path d="M4 3h11v8H4zM9 11v4M6 15h6M1 1h4v4H1zM3 5v6" stroke="#fff" /></Icon>
        <Icon className="ml-2 size-4" box="0 0 16 16"><path d="M1 6h3l4-4v12l-4-4H1zM10 5c1 2 1 4 0 6M12 3c2 3 2 7 0 10" stroke="#fff" /></Icon>
        <span className="mx-2.5">РУС</span>
        <time className="mr-3 text-center">15:27<br />22.04.2020</time>
        <button aria-label="Уведомления"><Icon className="size-4" box="0 0 16 16"><path d="M0 0h16v12h-3v4l-4-4H0z" fill="#fff" /><path d="M3 3.500h10M3 6h10M3 8.500h10" stroke="#333" /></Icon></button>
      </div>
    </footer>
  );
}

export default function App() {
  return (
    <div className="flex min-h-screen flex-col bg-gradient-to-b from-[#6d7448] via-[#3a4652] to-[#4c5468]">
      <main className="flex flex-1">
        <div className="flex w-1/2 flex-col pt-px">
          <NinjaWindow interval="10 Минута" tabs={["ES 06-20"]}>
            <ClusterChart />
          </NinjaWindow>
          <NinjaWindow interval="15 Секунда" tabs={["ES 06-20", "ES 06-20"]}>
            <SecondsChart />
          </NinjaWindow>
        </div>
        <div className="flex w-1/2 flex-col">
          <MetaTrader />
        </div>
      </main>
      <Taskbar />
    </div>
  );
}
